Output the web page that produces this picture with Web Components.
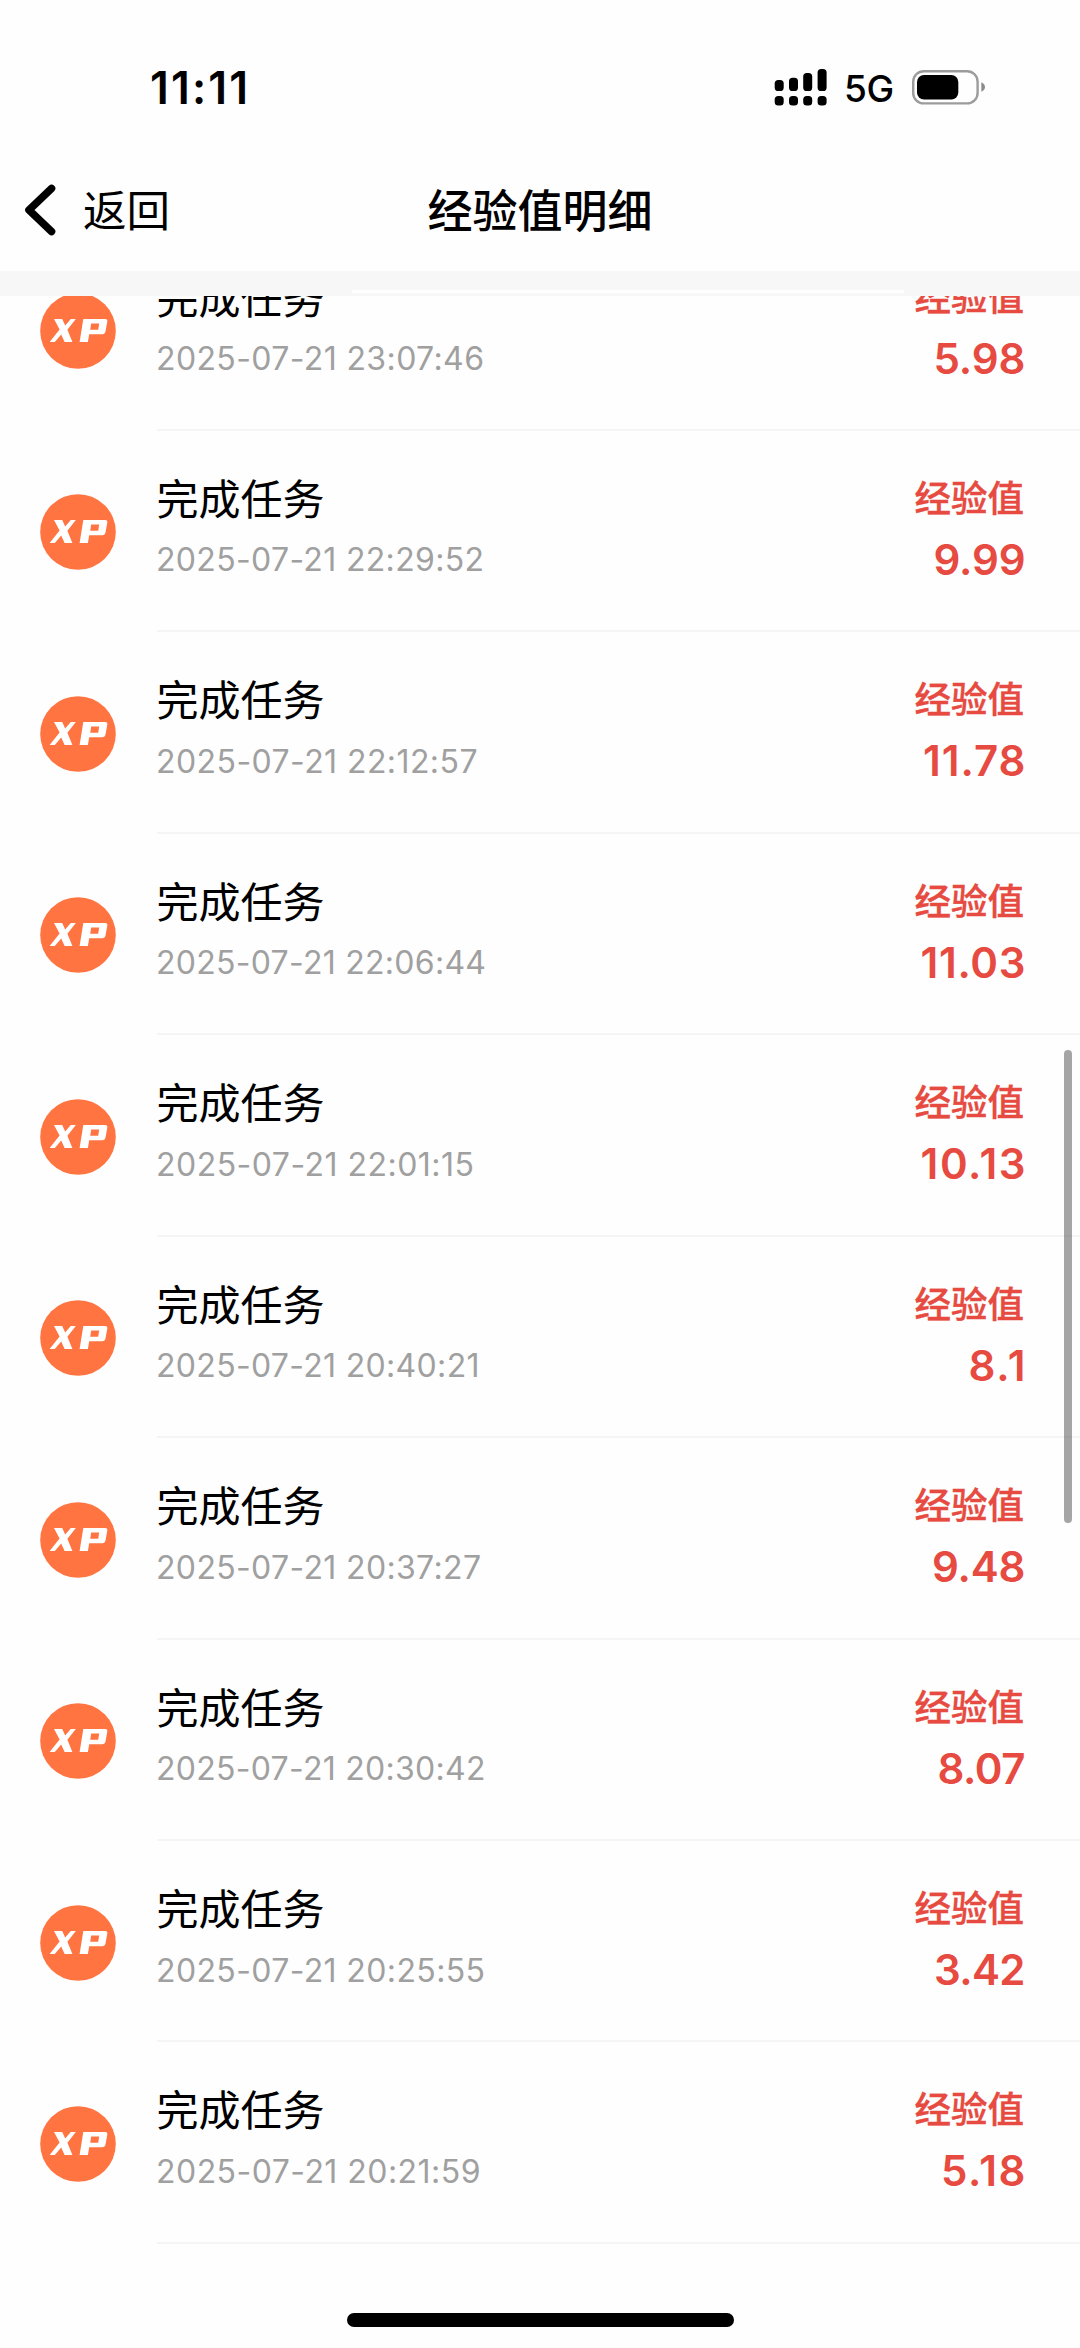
<!DOCTYPE html>
<html lang="zh-CN">
<head>
<meta charset="utf-8">
<title>经验值明细</title>
<style>
html,body{margin:0;padding:0}
body{width:1080px;height:2348px;overflow:hidden;background:#fefefe;font-family:Inter,"Noto Sans CJK SC",sans-serif;color:#000}
</style>
</head>
<body>
<xp-screen></xp-screen>
<script>
function define(name, html, setup) {
  const t = document.createElement('template');
  t.innerHTML = html;
  customElements.define(name, class extends HTMLElement {
    constructor() {
      super();
      this.attachShadow({ mode: 'open' }).append(t.content.cloneNode(true));
    }
    connectedCallback() { if (setup) setup(this, this.shadowRoot); }
  });
}

// Spreads a text's letter spacing so that it takes the given width.
function fit(node, width) {
  const now = node.getBoundingClientRect().width;
  const n = node.textContent.length;
  const gap = (width - now) / (n - 1);
  node.style.letterSpacing = gap + 'px';
  node.style.marginRight = -gap + 'px';
}

define('status-bar', `
<style>
:host{display:flex;height:150px;box-sizing:border-box;padding:64px 95px 0 150px;justify-content:space-between;align-items:flex-start}
.time{font-size:44.5px;font-weight:600;line-height:48px;font-kerning:none}
.right{display:flex;align-items:flex-start}
.net{font-size:37px;font-weight:500;line-height:50px;width:49px;margin:0 18px 0 16px;white-space:nowrap;letter-spacing:-.4px}
svg{display:block}
</style>
<span class="time">11:11</span>
<div class="right">
<svg width="54" height="44" viewBox="774 64 54 44"><g fill="#000">
<rect x="774.7" y="80" width="9" height="11" rx="3.6"/><rect x="789" y="77.7" width="9" height="13.3" rx="3.6"/><rect x="803.2" y="73" width="9" height="18" rx="3.6"/><rect x="817.6" y="69" width="9" height="22" rx="3.6"/>
<rect x="774.7" y="96" width="9" height="9.6" rx="3.6"/><rect x="789" y="96" width="9" height="9.6" rx="3.6"/><rect x="803.2" y="96" width="9" height="9.6" rx="3.6"/><rect x="817.6" y="96" width="9" height="9.6" rx="3.6"/></g></svg>
<span class="net">5G</span>
<svg width="74" height="44" viewBox="911 64 74 44"><rect x="913.2" y="71.2" width="64.4" height="32.2" rx="10.5" fill="none" stroke="#9c9c9c" stroke-width="2.4"/><rect x="917" y="75" width="41.3" height="24.6" rx="7" fill="#000"/><path d="M981.3 82.2Q985 84 985 87T981.3 91.8Z" fill="#8c8c8c"/></svg>
</div>`, (el, root) => fit(root.querySelector('.time'), 98));

define('nav-bar', `
<style>
:host{display:grid;grid-template-columns:1fr auto 1fr;align-items:center;height:121px;box-sizing:border-box;padding:0 24px 0 24px}
.back{display:flex;align-items:center;font-size:43.5px;line-height:60px}
.back svg{display:block;margin:-1px 26px 0 0}
.title{font-size:45px;font-weight:500;line-height:60px;padding-top:2px}
.back span{padding-top:1px}
</style>
<div class="back"><svg width="33" height="52" viewBox="0 0 33 52"><path d="M27.5 4.5 5 26 27.5 47.5" fill="none" stroke="#000" stroke-width="7.6" stroke-linecap="round" stroke-linejoin="round"/></svg><span>返回</span></div>
<div class="title"><slot></slot></div><div></div>`);

define('xp-badge', `
<style>:host{display:block;width:76px;height:76px}svg{display:block}</style>
<svg width="76" height="76" viewBox="0 0 76 76"><circle cx="38" cy="38" r="37.8" fill="#ff7441"/>
<g fill="#fff"><path d="M14 26H22.2l3 6.5 5.6-6.5h5l-8.4 10.8 5 12.2h-7.8l-3.4-7.4-6.4 7.4H9.6l10-12.4z"/><path fill-rule="evenodd" d="M43.3 26h22q2.4 0 2 2.5l-1.7 9.5q-.6 3.2-3.4 3.2H49.2l-1.3 7.8h-8.3zM51.2 30.5l-1 6.2h8l1-6.2z"/></g></svg>`);

define('xp-row', `
<style>
:host{display:flex;height:201.45px;box-sizing:border-box;padding-left:39.5px}
xp-badge{margin:63.5px 41.5px 0 0;flex:none}
.body{flex:1;display:flex;justify-content:space-between;box-sizing:border-box;border-bottom:2px solid #f5f5f5;padding-right:56px}
.l,.r{display:flex;flex-direction:column;align-items:flex-start}
.r{align-items:flex-end;color:#e64a40}
.name{font-size:42px;line-height:60px;margin:39px 0 0 -.5px}
.date{font-size:32px;line-height:40px;margin-top:10.5px;margin-left:-1px;color:#a0a0a0;white-space:nowrap}
.tag{font-size:36.5px;font-weight:500;line-height:54px;margin-top:41px;-webkit-text-stroke:.4px currentColor}
.num{font-size:42px;font-weight:600;line-height:50px;margin-top:9px;position:relative;left:1.5px}
</style>
<xp-badge></xp-badge>
<div class="body"><div class="l"><span class="name">完成任务</span><span class="date"></span></div>
<div class="r"><span class="tag">经验值</span><span class="num"></span></div></div>`,
(el, root) => {
  const date = root.querySelector('.date'), num = root.querySelector('.num');
  date.textContent = el.getAttribute('date');
  num.textContent = el.getAttribute('value');
  fit(date, +el.getAttribute('date-width'));
  fit(num, +el.getAttribute('value-width'));
});

define('xp-list', `
<style>
:host{display:flex;flex-direction:column;justify-content:flex-start;height:2052px;overflow:hidden}
.rows{margin-top:-66px}
xp-row{flex:none}
</style><div class="rows"></div>`,
(el, root) => {
  const data = [['23:07:46','5.98',328,92],['22:29:52','9.99',328,92],['22:12:57','11.78',321.5,102.5],['22:06:44','11.03',330,105],['22:01:15','10.13',318,105],['20:40:21','8.1',323.5,57],['20:37:27','9.48',325,93.5],['20:30:42','8.07',329.5,88],['20:25:55','3.42',329,91.5],['20:21:59','5.18',324.5,84.5]];
  for (const [t, v, dw, vw] of data) {
    const r = document.createElement('xp-row');
    r.setAttribute('date', '2025-07-21 ' + t);
    r.setAttribute('value', v);
    r.setAttribute('date-width', dw);
    r.setAttribute('value-width', vw);
    root.querySelector('.rows').append(r);
  }
});

define('xp-screen', `
<style>
:host{display:flex;flex-direction:column;position:relative;height:2348px}
status-bar,nav-bar,xp-list,.band{flex:none}
.band{height:24.5px;background:#f7f7f7;display:flex;flex-direction:column;justify-content:flex-end}
.line{height:3px;margin:0 176px 3px 352px;background:#fefefe}
.scroll{position:absolute;left:1064px;top:1049.5px;width:8px;height:473px;border-radius:4px;background:rgba(0,0,0,.35)}
.home{position:absolute;left:346.5px;top:2313px;width:387px;height:13.5px;border-radius:7px;background:#000}
</style>
<status-bar></status-bar><nav-bar>经验值明细</nav-bar><div class="band"><div class="line"></div></div><xp-list></xp-list>
<div class="scroll"></div><div class="home"></div>`);
</script>
</body>
</html>
